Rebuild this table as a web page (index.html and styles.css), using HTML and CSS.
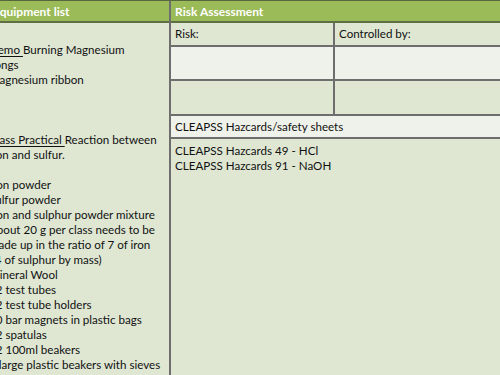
FILE: index.html
```html
<!DOCTYPE html>
<html>
<head>
<meta charset="utf-8">
<link rel="stylesheet" href="styles.css">
</head>
<body>
<div class="sheet">
  <div class="col left">
    <div class="head">Equipment list</div>
    <div class="equip">
      <p class="blank">&nbsp;</p>
      <p><u>Demo </u>Burning Magnesium</p>
      <p>Tongs</p>
      <p>Magnesium ribbon</p>
      <p class="blank">&nbsp;</p>
      <p class="blank">&nbsp;</p>
      <p class="blank">&nbsp;</p>
      <p><u>Class Practical </u>Reaction between</p>
      <p>iron and sulfur.</p>
      <p class="blank">&nbsp;</p>
      <p>Iron powder</p>
      <p>Sulfur powder</p>
      <p>Iron and sulphur powder mixture</p>
      <p>About 20 g per class needs to be</p>
      <p>made up in the ratio of 7 of iron</p>
      <p>: 4 of sulphur by mass)</p>
      <p>Mineral Wool</p>
      <p>12 test tubes</p>
      <p>12 test tube holders</p>
      <p>10 bar magnets in plastic bags</p>
      <p>12 spatulas</p>
      <p>12 100ml beakers</p>
      <p>2 large plastic beakers with sieves</p>
    </div>
  </div>
  <div class="col right">
    <div class="head">Risk Assessment</div>
    <div class="risk">
      <div class="cell tint r1">Risk:</div>
      <div class="cell tint r1 last">Controlled by:</div>
      <div class="cell pale r2"></div>
      <div class="cell pale r2 last"></div>
      <div class="cell tint r3"></div>
      <div class="cell tint r3 last"></div>
    </div>
    <div class="row pale safety">CLEAPSS Hazcards/safety sheets</div>
    <div class="row tint cards">
      <p>CLEAPSS Hazcards 49 - HCl</p>
      <p>CLEAPSS Hazcards 91 - NaOH</p>
    </div>
  </div>
</div>
</body>
</html>
```
FILE: styles.css
```css
html, body {
  margin: 0;
  padding: 0;
  width: 500px;
  height: 375px;
  overflow: hidden;
  background: #dfe7d3;
}
* { box-sizing: border-box; }
.sheet {
  display: flex;
  margin-left: -16px;
  width: 540px;
  border-top: 1px solid #56663e;
  font-family: Lato, "Liberation Sans", sans-serif;
  font-size: 11.6px;
  color: #111;
  line-height: 15px;
}
.col { display: flex; flex-direction: column; }
.left {
  width: 187px;
  border-right: 2px solid #6e6e6e;
  background: #dfe7d3;
  min-height: 400px;
}
.right { flex: 1; }
.head {
  height: 22px;
  background: #9bbb59;
  border-bottom: 2px solid #5f6f45;
  color: #fff;
  font-weight: bold;
  font-size: 12px;
  padding: 3px 5px 0 9px;
}
.right .head { padding-left: 4px; }
.equip { padding: 4px 5px 0; }
.equip p, .cards p { margin: 0; white-space: nowrap; }
.equip u { text-decoration-thickness: 1px; text-underline-offset: 2px; }
.tint { background: #dfe7d3; }
.pale { background: #eff2ea; }
.risk {
  display: grid;
  grid-template-columns: 164px 1fr;
}
.cell {
  border-bottom: 2px solid #6e6e6e;
  border-right: 2px solid #6e6e6e;
  padding: 3px 4px 0;
}
.cell.last { border-right: none; }
.r1 { height: 24px; }
.r2 { height: 34px; }
.r3 { height: 35px; }
.row { padding: 3px 4px 0; }
.safety { height: 23px; border-bottom: 2px solid #6e6e6e; }
.cards { padding-top: 4px; min-height: 260px; }
```
